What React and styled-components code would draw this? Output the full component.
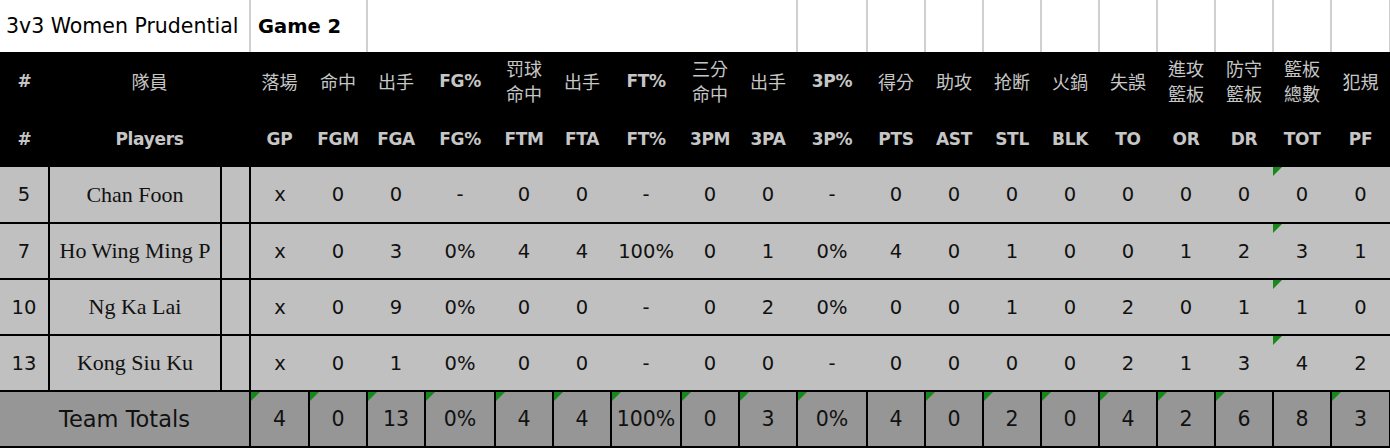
import React from "react";
import styled, { createGlobalStyle, css } from "styled-components";

const GlobalStyle = createGlobalStyle`
  html, body {
    margin: 0;
    padding: 0;
    background: #fff;
  }
  body {
    width: 1390px;
    height: 448px;
    overflow: hidden;
  }
`;

// column widths taken from the sheet
const colWidths = [
  49, 172, 29, 59, 58, 58, 70, 58, 58, 70, 58, 58, 70, 58, 58, 58, 58, 58, 58,
  58, 58, 59,
];

const Sheet = styled.table`
  border-collapse: collapse;
  table-layout: fixed;
  width: 1390px;
  font-family: "DejaVu Sans", "Noto Sans CJK TC", sans-serif;
`;

const TitleRow = styled.tr`
  height: 52px;
  background: #fff;
`;

const TitleCell = styled.td`
  padding: 0 0 0 ${(p) => (p.$bold ? "7px" : "6px")};
  font-size: ${(p) => (p.$bold ? "19.5px" : "20.5px")};
  font-weight: ${(p) => (p.$bold ? 700 : 400)};
  color: #000;
  white-space: nowrap;
  border-right: 2px solid #d0d0d0;
  vertical-align: middle;
`;

const HeadRow = styled.tr`
  height: ${(p) => p.$h}px;
  background: #000;
`;

const HeadCell = styled.th`
  padding: 0;
  text-align: center;
  vertical-align: middle;
  color: #c6c6c6;
  white-space: nowrap;
  ${(p) =>
    p.$cjk
      ? css`
          font-family: "Noto Sans CJK TC", sans-serif;
          font-weight: 400;
          font-size: 18px;
          line-height: 25px;
        `
      : css`
          font-weight: 700;
          font-size: 17px;
          letter-spacing: -0.3px;
        `}
`;

const BodyRow = styled.tr`
  height: 56px;
  background: #c0c0c0;
  border-bottom: 2px solid #000;
`;

const note = css`
  position: relative;
  &::before {
    content: "";
    position: absolute;
    left: 0;
    top: 0;
    border-top: 9px solid #17891a;
    border-right: 9px solid transparent;
  }
`;

const Cell = styled.td`
  padding: 0;
  text-align: center;
  vertical-align: middle;
  font-size: 19.5px;
  color: #111;
  white-space: nowrap;
  ${(p) => p.$rule && "border-right: 2px solid #000;"}
  ${(p) => p.$note && note}
`;

const NameCell = styled.td`
  padding: 0;
  text-align: center;
  vertical-align: middle;
  font-family: "Liberation Serif", serif;
  font-size: 22px;
  color: #111;
  white-space: nowrap;
  border-right: 2px solid #000;
`;

const TotalRow = styled.tr`
  height: 56px;
  background: #969696;
  border-bottom: 2px solid #000;
`;

const TotalLabel = styled.td`
  padding: 0;
  text-align: center;
  vertical-align: middle;
  font-size: 22.5px;
  color: #111;
`;

const TotalCell = styled.td`
  padding: 0;
  text-align: center;
  vertical-align: middle;
  font-size: 20.5px;
  color: #111;
  border-left: 2px solid #000;
  border-right: 2px solid #000;
  ${(p) => p.$note && note}
`;

const cnHeads = [
  "落場",
  "命中",
  "出手",
  "FG%",
  "罚球\n命中",
  "出手",
  "FT%",
  "三分\n命中",
  "出手",
  "3P%",
  "得分",
  "助攻",
  "抢断",
  "火鍋",
  "失誤",
  "進攻\n籃板",
  "防守\n籃板",
  "籃板\n總數",
  "犯規",
];

const enHeads = [
  "GP", "FGM", "FGA", "FG%", "FTM", "FTA", "FT%", "3PM", "3PA", "3P%",
  "PTS", "AST", "STL", "BLK", "TO", "OR", "DR", "TOT", "PF",
];

const players = [
  { no: 5, name: "Chan Foon", v: ["x", "0", "0", "-", "0", "0", "-", "0", "0", "-", "0", "0", "0", "0", "0", "0", "0", "0", "0"] },
  { no: 7, name: "Ho Wing Ming P", v: ["x", "0", "3", "0%", "4", "4", "100%", "0", "1", "0%", "4", "0", "1", "0", "0", "1", "2", "3", "1"] },
  { no: 10, name: "Ng Ka Lai", v: ["x", "0", "9", "0%", "0", "0", "-", "0", "2", "0%", "0", "0", "1", "0", "2", "0", "1", "1", "0"] },
  { no: 13, name: "Kong Siu Ku", v: ["x", "0", "1", "0%", "0", "0", "-", "0", "0", "-", "0", "0", "0", "0", "2", "1", "3", "4", "2"] },
];

const totals = ["4", "0", "13", "0%", "4", "4", "100%", "0", "3", "0%", "4", "0", "2", "0", "4", "2", "6", "8", "3"];

const TOT = 17;
const PTS = 10;

const isCjk = (s) => /[\u3400-\u9fff]/.test(s);

const HeadLabel = ({ text }) =>
  text.split("\n").map((line, i) => (
    <React.Fragment key={i}>
      {i > 0 && <br />}
      {line}
    </React.Fragment>
  ));

export default function App() {
  return (
    <>
      <GlobalStyle />
      <Sheet>
        <colgroup>
          {colWidths.map((w, i) => (
            <col key={i} style={{ width: w }} />
          ))}
        </colgroup>
        <tbody>
          <TitleRow>
            <TitleCell colSpan={3}>3v3 Women Prudential</TitleCell>
            <TitleCell colSpan={2} $bold>
              Game 2
            </TitleCell>
            <TitleCell colSpan={7} />
            {Array.from({ length: 10 }).map((_, i) => (
              <TitleCell key={i} />
            ))}
          </TitleRow>

          <HeadRow $h={58}>
            <HeadCell>#</HeadCell>
            <HeadCell colSpan={2} $cjk>
              隊員
            </HeadCell>
            {cnHeads.map((h, i) => (
              <HeadCell key={i} $cjk={isCjk(h)}>
                <HeadLabel text={h} />
              </HeadCell>
            ))}
          </HeadRow>
          <HeadRow $h={57}>
            <HeadCell>#</HeadCell>
            <HeadCell colSpan={2}>Players</HeadCell>
            {enHeads.map((h) => (
              <HeadCell key={h}>{h}</HeadCell>
            ))}
          </HeadRow>

          {players.map((p) => (
            <BodyRow key={p.no}>
              <Cell $rule>{p.no}</Cell>
              <NameCell>{p.name}</NameCell>
              <Cell $rule />
              {p.v.map((val, i) => (
                <Cell key={i} $note={i === TOT}>
                  {val}
                </Cell>
              ))}
            </BodyRow>
          ))}

          <TotalRow>
            <TotalLabel colSpan={3}>Team Totals</TotalLabel>
            {totals.map((val, i) => (
              <TotalCell key={i} $note={i !== TOT && i !== PTS}>
                {val}
              </TotalCell>
            ))}
          </TotalRow>
        </tbody>
      </Sheet>
    </>
  );
}
